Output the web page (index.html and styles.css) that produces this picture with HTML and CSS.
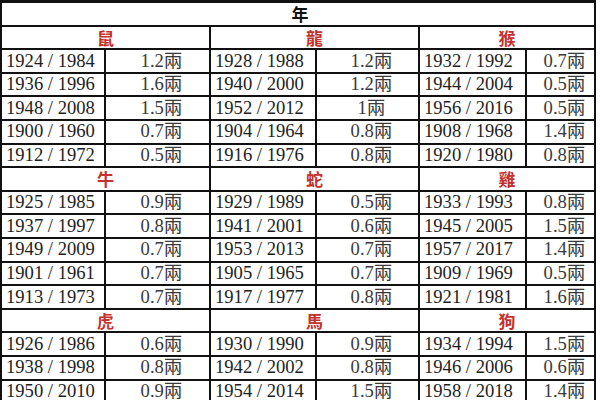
FILE: index.html
```html
<!DOCTYPE html>
<html lang="zh-Hant">
<head>
<meta charset="utf-8">
<title>年</title>
<link rel="stylesheet" href="styles.css">
</head>
<body>
<div class="sheet">
  <div class="cell title">年</div>

  <div class="cell animal">鼠</div><div class="cell animal">龍</div><div class="cell animal">猴</div>
  <div class="cell year">1924 / 1984</div><div class="cell val">1.2兩</div><div class="cell year">1928 / 1988</div><div class="cell val">1.2兩</div><div class="cell year">1932 / 1992</div><div class="cell val">0.7兩</div>
  <div class="cell year">1936 / 1996</div><div class="cell val">1.6兩</div><div class="cell year">1940 / 2000</div><div class="cell val">1.2兩</div><div class="cell year">1944 / 2004</div><div class="cell val">0.5兩</div>
  <div class="cell year">1948 / 2008</div><div class="cell val">1.5兩</div><div class="cell year">1952 / 2012</div><div class="cell val">1兩</div><div class="cell year">1956 / 2016</div><div class="cell val">0.5兩</div>
  <div class="cell year">1900 / 1960</div><div class="cell val">0.7兩</div><div class="cell year">1904 / 1964</div><div class="cell val">0.8兩</div><div class="cell year">1908 / 1968</div><div class="cell val">1.4兩</div>
  <div class="cell year">1912 / 1972</div><div class="cell val">0.5兩</div><div class="cell year">1916 / 1976</div><div class="cell val">0.8兩</div><div class="cell year">1920 / 1980</div><div class="cell val">0.8兩</div>

  <div class="cell animal">牛</div><div class="cell animal">蛇</div><div class="cell animal">雞</div>
  <div class="cell year">1925 / 1985</div><div class="cell val">0.9兩</div><div class="cell year">1929 / 1989</div><div class="cell val">0.5兩</div><div class="cell year">1933 / 1993</div><div class="cell val">0.8兩</div>
  <div class="cell year">1937 / 1997</div><div class="cell val">0.8兩</div><div class="cell year">1941 / 2001</div><div class="cell val">0.6兩</div><div class="cell year">1945 / 2005</div><div class="cell val">1.5兩</div>
  <div class="cell year">1949 / 2009</div><div class="cell val">0.7兩</div><div class="cell year">1953 / 2013</div><div class="cell val">0.7兩</div><div class="cell year">1957 / 2017</div><div class="cell val">1.4兩</div>
  <div class="cell year">1901 / 1961</div><div class="cell val">0.7兩</div><div class="cell year">1905 / 1965</div><div class="cell val">0.7兩</div><div class="cell year">1909 / 1969</div><div class="cell val">0.5兩</div>
  <div class="cell year">1913 / 1973</div><div class="cell val">0.7兩</div><div class="cell year">1917 / 1977</div><div class="cell val">0.8兩</div><div class="cell year">1921 / 1981</div><div class="cell val">1.6兩</div>

  <div class="cell animal">虎</div><div class="cell animal">馬</div><div class="cell animal">狗</div>
  <div class="cell year">1926 / 1986</div><div class="cell val">0.6兩</div><div class="cell year">1930 / 1990</div><div class="cell val">0.9兩</div><div class="cell year">1934 / 1994</div><div class="cell val">1.5兩</div>
  <div class="cell year">1938 / 1998</div><div class="cell val">0.8兩</div><div class="cell year">1942 / 2002</div><div class="cell val">0.8兩</div><div class="cell year">1946 / 2006</div><div class="cell val">0.6兩</div>
  <div class="cell year">1950 / 2010</div><div class="cell val">0.9兩</div><div class="cell year">1954 / 2014</div><div class="cell val">1.5兩</div><div class="cell year">1958 / 2018</div><div class="cell val">1.4兩</div>
</div>
</body>
</html>
```

FILE: styles.css
```css
html, body {
  margin: 0;
  padding: 0;
  background: #fff;
  overflow: hidden;
}

.sheet {
  width: 596px;
  box-sizing: border-box;
  display: grid;
  grid-template-columns: 102px 103px 104px 101px 105px 67px;
  grid-auto-rows: 21.6px;
  gap: 2px;
  padding: 3px 2px 2px 2px;
  background: #111;
  font-family: "Liberation Serif", "Noto Sans CJK TC", serif;
  font-size: 18.6px;
}

.cell {
  background: #fff;
  display: flex;
  align-items: center;
  white-space: nowrap;
  line-height: 1;
}

.title {
  grid-column: 1 / -1;
  justify-content: center;
  font-family: "Noto Sans CJK TC", sans-serif;
  font-weight: 700;
  font-size: 17px;
  color: #111;
  padding-left: 4px;
}

.animal {
  grid-column: span 2;
  justify-content: center;
  font-family: "Noto Sans CJK TC", sans-serif;
  font-weight: 700;
  font-size: 17px;
  color: #c4302b;
}

.year {
  padding-left: 4px;
  color: #1e1e1e;
}

.val {
  justify-content: center;
  padding-left: 8px;
  color: #3a3a3a;
}
```
